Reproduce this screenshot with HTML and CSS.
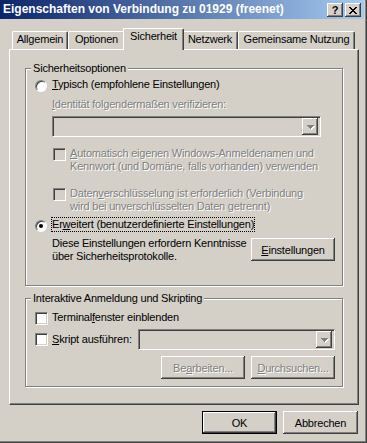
FILE: index.html
```html
<!DOCTYPE html>
<html lang="de">
<head>
    <meta charset="UTF-8">
    <title>Eigenschaften von Verbindung zu 01929 (freenet)</title>
    <link rel="stylesheet" href="styles.css">
</head>
<body>
    <div class="window">
        <div class="titlebar">
            <span class="title">Eigenschaften von Verbindung zu 01929 (freenet)</span>
            <button class="cap-btn help">?</button>
            <button class="cap-btn close">
                <svg width="8" height="7" viewBox="0 0 8 7" shape-rendering="crispEdges">
                    <path d="M0 0h2v1h-2z M6 0h2v1h-2z M1 1h2v1h-2z M5 1h2v1h-2z M2 2h4v1h-4z M3 3h2v1h-2z M2 4h4v1h-4z M1 5h2v1h-2z M5 5h2v1h-2z M0 6h2v1h-2z M6 6h2v1h-2z"/>
                </svg>
            </button>
        </div>

        <div class="dialog">
            <div class="tabs">
                <div class="tab tab-allgemein">Allgemein</div>
                <div class="tab tab-optionen">Optionen</div>
                <div class="tab tab-sicherheit active">Sicherheit</div>
                <div class="tab tab-netzwerk">Netzwerk</div>
                <div class="tab tab-nutzung">Gemeinsame Nutzung</div>
            </div>

            <div class="panel">
                <fieldset class="group group-security">
                    <legend>Sicherheitsoptionen</legend>
                    <div class="group-body">
                        <div class="option">
                            <span class="radio"></span>
                            <span><u>T</u>ypisch (empfohlene Einstellungen)</span>
                        </div>
                        <div class="field-label disabled"><u>I</u>dentität folgendermaßen verifizieren:</div>
                        <div class="combo combo-identity">
                            <span class="combo-btn">
                                <svg width="8" height="5" viewBox="0 0 8 5" shape-rendering="crispEdges">
                                    <path fill="#fff" d="M1 1h7v1h-7z M2 2h5v1h-5z M3 3h3v1h-3z M4 4h1v1h-1z"/>
                                    <path fill="#808080" d="M0 0h7v1h-7z M1 1h5v1h-5z M2 2h3v1h-3z M3 3h1v1h-1z"/>
                                </svg>
                            </span>
                        </div>
                        <div class="option sub option-auto">
                            <span class="check disabled-box"></span>
                            <span class="disabled"><u>A</u>utomatisch eigenen Windows-Anmeldenamen und<br>Kennwort (und Domäne, falls vorhanden) verwenden</span>
                        </div>
                        <div class="option sub option-crypt">
                            <span class="check disabled-box"></span>
                            <span class="disabled">Daten<u>v</u>erschlüsselung ist erforderlich (Verbindung<br>wird bei unverschlüsselten Daten getrennt)</span>
                        </div>
                        <div class="option option-advanced">
                            <span class="radio checked"><span class="dot"></span></span>
                            <span class="focus">Er<u>w</u>eitert (benutzerdefinierte Einstellungen)</span>
                        </div>
                        <div class="advanced-row">
                            <span class="advanced-text">Diese Einstellungen erfordern Kenntnisse<br>über Sicherheitsprotokolle.</span>
                            <button class="btn btn-settings"><u>E</u>instellungen</button>
                        </div>
                    </div>
                </fieldset>

                <fieldset class="group group-script">
                    <legend>Interaktive Anmeldung und Skripting</legend>
                    <div class="group-body">
                        <div class="option">
                            <span class="check"></span>
                            <span>Terminal<u>f</u>enster einblenden</span>
                        </div>
                        <div class="option script-row">
                            <span class="check"></span>
                            <span><u>S</u>kript ausführen:</span>
                            <div class="combo combo-script">
                                <span class="combo-btn">
                                    <svg width="8" height="5" viewBox="0 0 8 5" shape-rendering="crispEdges">
                                        <path fill="#fff" d="M1 1h7v1h-7z M2 2h5v1h-5z M3 3h3v1h-3z M4 4h1v1h-1z"/>
                                        <path fill="#808080" d="M0 0h7v1h-7z M1 1h5v1h-5z M2 2h3v1h-3z M3 3h1v1h-1z"/>
                                    </svg>
                                </span>
                            </div>
                        </div>
                        <div class="script-buttons">
                            <button class="btn disabled">Be<u>a</u>rbeiten...</button>
                            <button class="btn disabled"><u>D</u>urchsuchen...</button>
                        </div>
                    </div>
                </fieldset>
            </div>

            <div class="footer">
                <button class="btn btn-default">OK</button>
                <button class="btn">Abbrechen</button>
            </div>
        </div>
    </div>
</body>
</html>
```

FILE: styles.css
```css
* {
    box-sizing: border-box;
}
body {
    margin: 0;
    font-family: "Liberation Sans", Arial, sans-serif;
    font-size: 11px;
    line-height: 13px;
    letter-spacing: -0.2px;
    color: #000;
    background: #d4d0c8;
}
u {
    text-decoration: underline;
    text-underline-offset: 1px;
}
.window {
    width: 367px;
    height: 443px;
    background: #d4d0c8;
    box-shadow: inset -1px -1px 0 #404040, inset -2px -2px 0 #808080;
}
.titlebar {
    display: flex;
    align-items: center;
    width: 364px;
    height: 19px;
    padding: 0 3px 0 3px;
    background: linear-gradient(to right, #0a246a, #a6caf0);
    color: #fff;
    font-size: 12px;
    font-weight: bold;
    letter-spacing: 0;
}
.title {
    flex: 1;
    white-space: nowrap;
}
.cap-btn {
    display: flex;
    align-items: center;
    justify-content: center;
    width: 16px;
    height: 14px;
    margin: 1px 0 0 0;
    padding: 0;
    border: 0;
    background: #d4d0c8;
    color: #000;
    font-family: "Liberation Sans", Arial, sans-serif;
    font-size: 11px;
    font-weight: bold;
    box-shadow: inset -1px -1px 0 #404040, inset 1px 1px 0 #fff, inset -2px -2px 0 #808080;
}
.cap-btn.close {
    margin-left: 2px;
}
.dialog {
    width: 359px;
    padding: 9px 0 0 9px;
}
.tabs {
    display: flex;
    align-items: flex-end;
    height: 21px;
    padding-left: 3px;
}
.tab {
    height: 18px;
    padding-top: 1px;
    text-align: center;
    white-space: nowrap;
    border-top: 1px solid #fff;
    border-left: 1px solid #fff;
    border-right: 1px solid #404040;
    border-radius: 2px 2px 0 0;
    box-shadow: inset -1px 0 0 #808080;
}
.tab-allgemein { width: 56px; }
.tab-optionen { width: 57px; }
.tab-netzwerk { width: 56px; }
.tab-nutzung { width: 117px; }
.tab.active {
    position: relative;
    z-index: 1;
    width: 61px;
    height: 22px;
    margin: 0 -2px -1px;
    padding-top: 1px;
    background: #d4d0c8;
}
.panel {
    width: 350px;
    padding: 12px 14px 17px 15px;
    border-top: 1px solid #fff;
    border-left: 1px solid #fff;
    border-right: 1px solid #404040;
    border-bottom: 1px solid #404040;
    box-shadow: inset -1px -1px 0 #808080;
}
.group {
    width: 318px;
    min-width: 0;
    margin: 0;
    padding: 0;
    border: 1px solid #808080;
    box-shadow: inset 1px 1px 0 #fff, 1px 1px 0 #fff;
}
.group legend {
    margin-left: 5px;
    padding: 0 2px;
    background: #d4d0c8;
}
.group-script {
    margin-top: 6px;
}
.group-body {
    padding: 3px 7px 22px 9px;
}
.group-script .group-body {
    padding: 6px 7px 7px 9px;
}
.option {
    display: flex;
    align-items: flex-start;
    white-space: nowrap;
}
.disabled {
    color: #808080;
    text-shadow: 1px 1px 0 #fff;
}
.radio {
    display: flex;
    align-items: center;
    justify-content: center;
    flex: none;
    width: 12px;
    height: 12px;
    margin: 2px 5px -1px 0;
    border: 1px solid;
    border-color: #808080 #fff #fff #808080;
    border-radius: 50%;
    background: #fff;
    box-shadow: inset 1px 1px 0 #404040;
}
.dot {
    width: 4px;
    height: 4px;
    border-radius: 50%;
    background: #000;
}
.check {
    flex: none;
    width: 13px;
    height: 13px;
    margin: 1px 4px 0 0;
    border: 1px solid;
    border-color: #808080 #fff #fff #808080;
    background: #fff;
    box-shadow: inset 1px 1px 0 #404040, inset -1px -1px 0 #d4d0c8;
}
.check.disabled-box {
    background: #d4d0c8;
}
.field-label {
    margin-top: 7px;
    padding-left: 17px;
}
.combo {
    display: flex;
    justify-content: flex-end;
    align-items: center;
    height: 21px;
    padding: 2px;
    border: 1px solid;
    border-color: #808080 #fff #fff #808080;
    background: #d4d0c8;
    box-shadow: inset 1px 1px 0 #404040, inset -1px -1px 0 #d4d0c8;
}
.combo-identity {
    width: 269px;
    margin: 5px 0 0 17px;
}
.combo-btn {
    display: flex;
    align-items: center;
    justify-content: center;
    width: 16px;
    height: 17px;
    padding: 1px 0 0 1px;
    background: #d4d0c8;
    box-shadow: inset -1px -1px 0 #404040, inset 1px 1px 0 #fff, inset -2px -2px 0 #808080;
}
.option.sub {
    padding-left: 18px;
}
.option-auto {
    margin-top: 10px;
}
.option-crypt {
    margin-top: 14px;
}
.option-advanced {
    margin-top: 5px;
}
.focus {
    outline: 1px dotted #000;
}
.advanced-row {
    display: flex;
    justify-content: space-between;
    align-items: flex-start;
    margin-top: 6px;
    padding-left: 17px;
}
.advanced-text {
    white-space: nowrap;
}
.btn {
    width: 75px;
    height: 23px;
    padding: 0;
    border: 0;
    background: #d4d0c8;
    color: #000;
    font-family: "Liberation Sans", Arial, sans-serif;
    font-size: 11px;
    letter-spacing: -0.2px;
    box-shadow: inset -1px -1px 0 #404040, inset 1px 1px 0 #fff, inset -2px -2px 0 #808080;
}
.btn.disabled {
    width: 84px;
    color: #808080;
    text-shadow: 1px 1px 0 #fff;
}
.btn-settings {
    width: 84px;
    margin-top: 1px;
}
.btn-default {
    box-shadow: inset 0 0 0 1px #000, inset -2px -2px 0 #404040, inset 2px 2px 0 #fff, inset -3px -3px 0 #808080;
}
.script-row {
    align-items: center;
    margin-top: 4px;
}
.script-row .check {
    margin-top: 0;
}
.combo-script {
    flex: 1;
    margin-left: 6px;
}
.script-buttons {
    display: flex;
    justify-content: flex-end;
    gap: 6px;
    margin-top: 6px;
}
.footer {
    display: flex;
    justify-content: flex-end;
    gap: 6px;
    width: 350px;
    margin-top: 6px;
    padding-right: 1px;
}
```
